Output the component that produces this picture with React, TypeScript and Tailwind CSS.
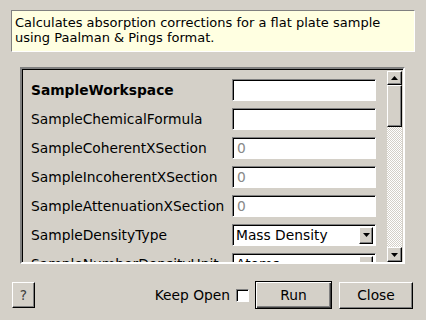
import { ReactNode } from "react";

const raised =
  "border border-t-white border-l-white border-r-black border-b-black shadow-[inset_-1px_-1px_#808080]";
const sunken =
  "border border-t-[#808080] border-l-[#808080] border-r-white border-b-white shadow-[inset_1px_1px_#000000]";

const ArrowDown = () => (
  <svg width="7" height="4" viewBox="0 0 7 4">
    <path d="M0 0H7L3.5 4Z" fill="#000" />
  </svg>
);

const ArrowUp = () => (
  <svg width="7" height="4" viewBox="0 0 7 4">
    <path d="M0 4H7L3.5 0Z" fill="#000" />
  </svg>
);

interface RowProps {
  label: string;
  bold?: boolean;
  children: ReactNode;
}

const Row = ({ label, bold, children }: RowProps) => (
  <div className="flex items-center h-[22px] shrink-0">
    <div className={`w-[201px] whitespace-nowrap ${bold ? "font-bold" : ""}`}>{label}</div>
    {children}
  </div>
);

const TextBox = ({ value }: { value?: string }) => (
  <div className={`w-[144px] h-[22px] bg-white ${sunken} flex items-center pl-[4px] text-[#8a8a8a]`}>
    {value}
  </div>
);

const Combo = ({ value }: { value: string }) => (
  <div className={`w-[144px] h-[22px] bg-white ${sunken} flex items-center pl-[3px] pr-[2px]`}>
    <span className="flex-1 whitespace-nowrap">{value}</span>
    <div className={`w-[14px] h-[17px] bg-[#d4d0c8] ${raised} flex items-center justify-center`}>
      <ArrowDown />
    </div>
  </div>
);

export default function App() {
  return (
    <div
      className="w-[426px] h-[320px] bg-[#d4d0c8] flex flex-col overflow-hidden text-[13.8px] text-black"
      style={{ fontFamily: '"DejaVu Sans", sans-serif' }}
    >
      <div className="mx-[11px] mt-[10px] h-[42px] bg-[#ffffe1] border border-t-[#808080] border-l-[#808080] border-r-white border-b-white px-[3px] pt-[4px] text-[13px] leading-[15px]">
        Calculates absorption corrections for a flat plate sample
        <br />
        using Paalman &amp; Pings format.
      </div>

      <div className={`ml-[20px] mr-[21px] mt-[15px] h-[197px] flex ${sunken} border-2`}>
        <div className="flex-1 overflow-hidden flex flex-col gap-[7px] pt-[10px] pl-[9px]">
          <Row label="SampleWorkspace" bold>
            <TextBox />
          </Row>
          <Row label="SampleChemicalFormula">
            <TextBox />
          </Row>
          <Row label="SampleCoherentXSection">
            <TextBox value="0" />
          </Row>
          <Row label="SampleIncoherentXSection">
            <TextBox value="0" />
          </Row>
          <Row label="SampleAttenuationXSection">
            <TextBox value="0" />
          </Row>
          <Row label="SampleDensityType">
            <Combo value="Mass Density" />
          </Row>
          <Row label="SampleNumberDensityUnit">
            <Combo value="Atoms" />
          </Row>
        </div>
        <div className="w-[15px] mr-[1px] mt-[2px] flex flex-col">
          <div className={`h-[14px] bg-[#d4d0c8] ${raised} flex items-center justify-center`}>
            <ArrowUp />
          </div>
          <div className={`h-[42px] bg-[#d4d0c8] ${raised}`} />
          <div className="flex-1 bg-[repeating-conic-gradient(#ffffff_0_25%,#d4d0c8_0_50%)] bg-[length:2px_2px]" />
          <div className={`h-[15px] bg-[#d4d0c8] ${raised} flex items-center justify-center`}>
            <ArrowDown />
          </div>
        </div>
      </div>

      <div className="flex items-center mt-[17px] pl-[12px] pr-[13px]">
        <button className={`w-[23px] h-[26px] bg-[#d4d0c8] ${raised} text-[#404040]`}>?</button>
        <div className="flex-1" />
        <span>Keep Open</span>
        <div className={`w-[13px] h-[13px] ml-[6px] bg-white ${sunken}`} />
        <button className="ml-[6px] w-[77px] h-[28px] bg-[#d4d0c8] border border-black shadow-[inset_1px_1px_white,inset_-1px_-1px_#404040,inset_-2px_-2px_#808080]">
          Run
        </button>
        <button className={`ml-[7px] w-[74px] h-[27px] bg-[#d4d0c8] ${raised}`}>Close</button>
      </div>
    </div>
  );
}
